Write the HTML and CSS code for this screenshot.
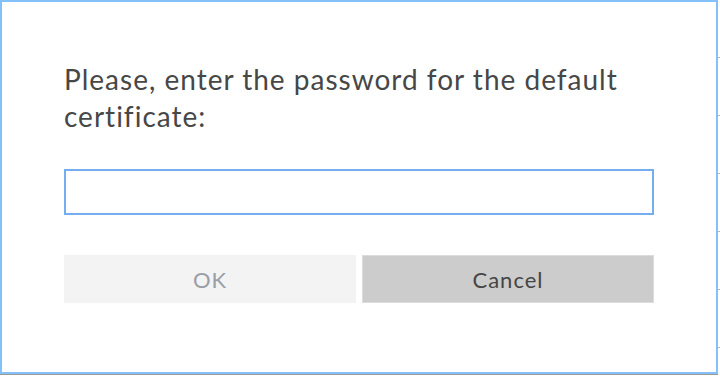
FILE: index.html
```html
<!DOCTYPE html>
<html lang="en">
<head>
    <meta charset="UTF-8">
    <title>Password</title>
    <link rel="stylesheet" href="styles.css">
</head>
<body>
<div class="page">
    <div class="dialog">
        <p class="message">Please, enter the password for the default certificate:</p>
        <input type="password" class="pwd">
        <div class="actions">
            <button class="btn btn-ok" disabled>OK</button>
            <button class="btn btn-cancel">Cancel</button>
        </div>
    </div>
    <div class="side"></div>
</div>
</body>
</html>
```
FILE: styles.css
```css
*{
    margin: 0;
    padding: 0;
    box-sizing: border-box;
}
body{
    background: #fff;
    font-family: Lato, "Noto Sans", sans-serif;
}
.page{
    display: flex;
    width: 720px;
    height: 377px;
}
.dialog{
    width: 718px;
    height: 374px;
    border: 2px solid #84c1fa;
    background: #fff;
    padding: 59px 62px 0 62px;
    box-shadow: 0 1px 0 #9a9a9a;
}
.side{
    flex: 1;
    height: 374px;
    background: repeating-linear-gradient(to bottom, #fff 0, #fff 57px, #b8b8b8 57px, #b8b8b8 58px);
}
.message{
    width: 590px;
    font-size: 28px;
    letter-spacing: 1px;
    line-height: 37px;
    color: #474747;
}
.pwd{
    display: block;
    width: 590px;
    height: 46px;
    margin-top: 34px;
    border: 2px solid #75aef0;
    outline: none;
    background: #fff;
}
.actions{
    display: flex;
    gap: 6px;
    width: 590px;
    margin-top: 40px;
}
.btn{
    flex: 1;
    height: 48px;
    font-family: Lato, "Noto Sans", sans-serif;
    font-size: 22px;
    letter-spacing: 1px;
    border: 1px solid transparent;
}
.btn-ok{
    background: #f3f3f3;
    color: #9a9ea6;
}
.btn-cancel{
    background: #cccccc;
    border-color: #dcdcdc;
    color: #454545;
}
```
